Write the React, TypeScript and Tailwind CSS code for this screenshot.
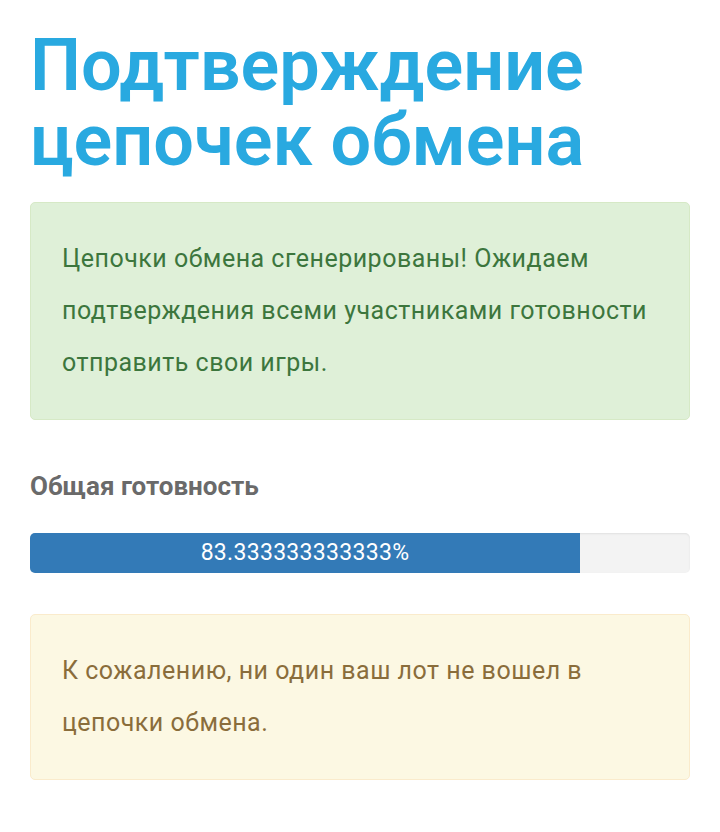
export default function App() {
  const progress = 83.333333333333;

  return (
    <div className="min-h-screen bg-white px-[30px] pt-[28px] font-['Roboto',sans-serif]">
      {/* Title */}
      <h1 className="text-[72px] font-semibold leading-[75px] text-[#29a9e0]">
        Подтверждение цепочек обмена
      </h1>

      {/* Success alert */}
      <div className="mt-[24px] rounded-[5px] border border-[#d6e9c6] bg-[#dff0d8] px-[31px] py-[30px] text-[25px] leading-[52px] tracking-[0.5px] text-[#3c763d]">
        Цепочки обмена сгенерированы! Ожидаем подтверждения всеми участниками готовности отправить свои игры.
      </div>

      {/* Progress */}
      <h4 className="mt-[51px] text-[26px] font-bold leading-[30px] text-[#6a6a6a]">Общая готовность</h4>
      <div className="mt-[32px] h-[40px] overflow-hidden rounded-[5px] bg-[#f3f3f3] shadow-[inset_0_1px_2px_rgba(0,0,0,0.08)]">
        <div
          className="flex h-full items-center justify-center bg-[#337ab7] text-[23px] tracking-[0.3px] text-white"
          style={{ width: `${progress}%` }}
        >
          {progress}%
        </div>
      </div>

      {/* Warning alert */}
      <div className="mt-[41px] rounded-[5px] border border-[#faebcc] bg-[#fcf8e3] px-[31px] py-[30px] text-[25px] leading-[52px] tracking-[0.5px] text-[#8a6d3b]">
        К сожалению, ни один ваш лот не вошел в цепочки обмена.
      </div>
    </div>
  );
}
